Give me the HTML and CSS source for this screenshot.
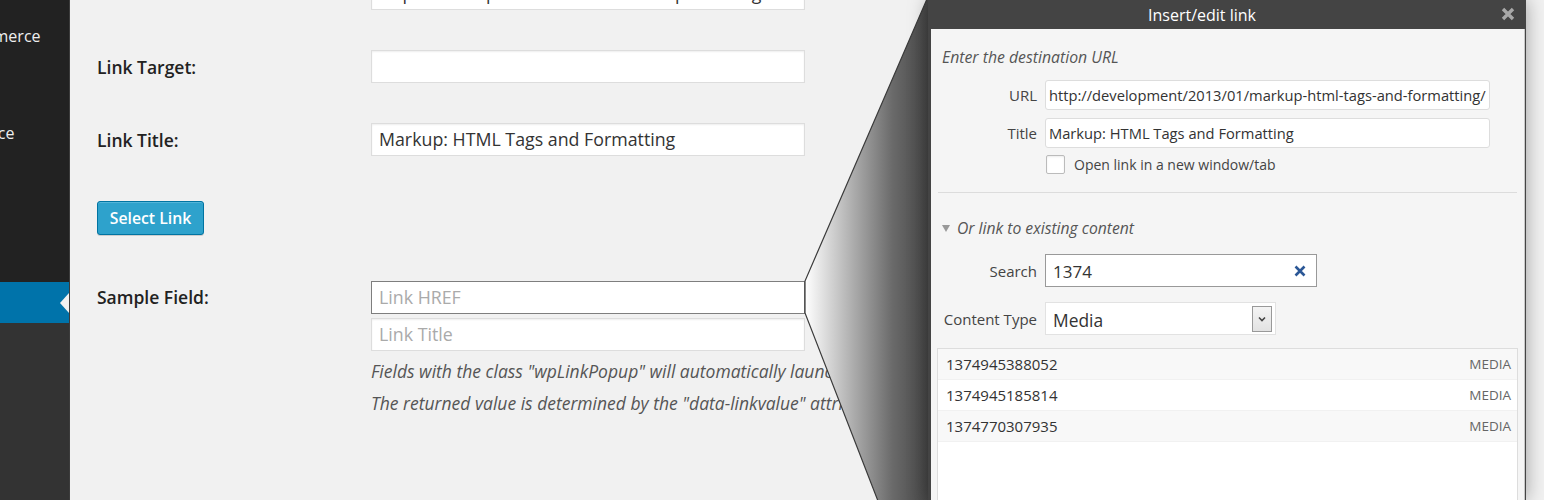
FILE: index.html
```html
<!DOCTYPE html>
<html>
<head>
<meta charset="utf-8">
<link rel="stylesheet" href="styles.css">
</head>
<body>
<div class="page">
  <aside class="sidebar">
    <div class="menu-top">
      <div class="menu-item"><span class="menu-text">WooCommerce</span></div>
      <div class="menu-item"><span class="menu-text">Appearance</span></div>
    </div>
    <div class="menu-active"><span class="active-arrow"></span></div>
    <div class="menu-bottom"></div>
  </aside>
  <main class="content">
    <div class="form">
      <div class="row">
        <div class="label"></div>
        <div class="input">http://development/2013/01/markup-html-tags-and-formatting/</div>
      </div>
      <div class="row">
        <div class="label">Link Target:</div>
        <div class="input"></div>
      </div>
      <div class="row">
        <div class="label">Link Title:</div>
        <div class="input">Markup: HTML Tags and Formatting</div>
      </div>
      <div class="row row-button">
        <button class="btn-primary">Select Link</button>
      </div>
      <div class="row row-sample">
        <div class="label">Sample Field:</div>
        <div class="field-stack">
          <div class="input input-focus placeholder">Link HREF</div>
          <div class="input input-second placeholder">Link Title</div>
          <p class="desc desc-first">Fields with the class "wpLinkPopup" will automatically launch the link dialog when focused.</p>
          <p class="desc">The returned value is determined by the "data-linkvalue" attribute on the field.</p>
        </div>
      </div>
    </div>
  </main>
</div>

<svg class="cone" width="1544" height="500" viewBox="0 0 1544 500">
  <defs>
    <linearGradient id="coneGrad" gradientUnits="userSpaceOnUse" x1="805" y1="0" x2="930" y2="0">
      <stop offset="0" stop-color="#ffffff"/>
      <stop offset="0.35" stop-color="#b4b4b4"/>
      <stop offset="0.7" stop-color="#6a6a6a"/>
      <stop offset="1" stop-color="#444444"/>
    </linearGradient>
  </defs>
  <polygon points="805,281 927,-1 940,-1 940,501 878,501 805,313" fill="url(#coneGrad)"/>
  <polyline points="927,-1 805,281 805,313 878,501" fill="none" stroke="#3a3a3a" stroke-width="1.2"/>
</svg>

<div class="popup">
  <div class="popup-header">
    <span class="popup-title">Insert/edit link</span>
    <svg class="popup-close" width="14" height="14" viewBox="0 0 14 14"><path d="M2 2L12 12M12 2L2 12" stroke="#a8a8a8" stroke-width="3.4" stroke-linecap="butt"/></svg>
  </div>
  <div class="popup-body">
    <p class="intro">Enter the destination URL</p>
    <div class="p-row">
      <span class="p-label">URL</span>
      <div class="p-input">http://development/2013/01/markup-html-tags-and-formatting/</div>
    </div>
    <div class="p-row">
      <span class="p-label">Title</span>
      <div class="p-input">Markup: HTML Tags and Formatting</div>
    </div>
    <div class="p-check">
      <span class="checkbox"></span>
      <span class="check-label">Open link in a new window/tab</span>
    </div>
    <div class="separator"></div>
    <p class="toggle"><span class="tri"></span>Or link to existing content</p>
    <div class="p-row p-row-tall">
      <span class="p-label">Search</span>
      <div class="search-input">
        <span>1374</span>
        <svg class="search-clear" width="12" height="12" viewBox="0 0 12 12"><path d="M1.5 1.5L10.5 10.5M10.5 1.5L1.5 10.5" stroke="#2b5796" stroke-width="2.6"/></svg>
      </div>
    </div>
    <div class="p-row p-row-tall p-row-select">
      <span class="p-label">Content Type</span>
      <div class="select">
        <span>Media</span>
        <span class="select-arrow"><svg width="8" height="6" viewBox="0 0 8 6"><path d="M1 1.5L4 4.5L7 1.5" fill="none" stroke="#444" stroke-width="1.6"/></svg></span>
      </div>
    </div>
    <div class="results">
      <div class="result alt"><span class="r-title">1374945388052</span><span class="r-type">MEDIA</span></div>
      <div class="result"><span class="r-title">1374945185814</span><span class="r-type">MEDIA</span></div>
      <div class="result alt"><span class="r-title">1374770307935</span><span class="r-type">MEDIA</span></div>
    </div>
  </div>
</div>
</body>
</html>
```

FILE: styles.css
```css
* { box-sizing: border-box; }
html, body {
  margin: 0;
  padding: 0;
  width: 1544px;
  height: 500px;
  overflow: hidden;
  background: #f1f1f1;
  font-family: "Open Sans", "Noto Sans", sans-serif;
  color: #333;
}
.page {
  display: flex;
  width: 1544px;
  height: 500px;
}
.sidebar {
  width: 70px;
  flex: none;
  display: flex;
  flex-direction: column;
  border-right: 1px solid #3c3c3c;
}
.menu-top {
  height: 282px;
  background: #222;
  padding-top: 19px;
  display: flex;
  flex-direction: column;
  gap: 63px;
}
.menu-item {
  height: 34px;
  display: flex;
  justify-content: flex-start;
  align-items: center;
  overflow: hidden;
  white-space: nowrap;
  color: #eee;
  font-size: 16px;
}
.menu-text {
  margin-left: -75px;
}
.menu-active {
  height: 41px;
  background: #0073aa;
  position: relative;
}
.active-arrow {
  position: absolute;
  right: 0;
  top: 11px;
  width: 0;
  height: 0;
  border-top: 10px solid transparent;
  border-bottom: 10px solid transparent;
  border-right: 9px solid #f1f1f1;
}
.menu-bottom {
  flex: 1;
  background: #333;
}
.content {
  flex: 1;
  padding-left: 27px;
}
.form {
  margin-top: -23px;
  display: flex;
  flex-direction: column;
}
.row {
  display: flex;
  align-items: center;
  height: 33px;
  margin-bottom: 40px;
}
.label {
  width: 274px;
  flex: none;
  font-size: 17.5px;
  font-weight: 600;
  color: #222;
}
.input {
  width: 434px;
  height: 33px;
  background: #fff;
  border: 1px solid #ddd;
  box-shadow: inset 0 1px 2px rgba(0,0,0,0.07);
  font-size: 17.8px;
  line-height: 31px;
  padding: 0 7px;
  white-space: nowrap;
  overflow: hidden;
  color: #333;
}
.placeholder { color: #aaa; }
.input-focus { border-color: #7e7e7e; box-shadow: none; }
.input-second { margin-top: 4px; }
.row-button {
  height: 34px;
  margin-top: 5px;
  margin-bottom: 46px;
}
.btn-primary {
  height: 34px;
  width: 107px;
  background: #2ea2cc;
  border: 1px solid #0074a2;
  border-radius: 3px;
  box-shadow: inset 0 1px 0 rgba(120,200,230,0.5), 0 1px 0 rgba(0,0,0,0.15);
  color: #fff;
  font-family: "Open Sans", "Noto Sans", sans-serif;
  font-size: 15.8px;
  font-weight: 600;
  padding: 0;
}
.row-sample {
  height: auto;
  align-items: flex-start;
}
.row-sample .label {
  line-height: 33px;
}
.field-stack {
  display: flex;
  flex-direction: column;
  width: 485px;
}
.desc {
  margin: 0;
  font-size: 17.5px;
  font-style: italic;
  color: #555;
  line-height: 32px;
  white-space: nowrap;
  overflow: hidden;
}
.desc-first { margin-top: 4px; }

.cone {
  position: absolute;
  left: 0;
  top: 0;
  pointer-events: none;
}

.popup {
  position: absolute;
  left: 928px;
  top: 0;
  width: 598px;
  height: 500px;
  background: #444;
  box-shadow: 0 0 18px rgba(0,0,0,0.35);
  display: flex;
  flex-direction: column;
  padding: 0 1px 0 3px;
}
.popup-header {
  height: 29px;
  flex: none;
  display: flex;
  align-items: center;
  justify-content: center;
  position: relative;
  padding-right: 52px;
  color: #fff;
  font-size: 16px;
}
.popup-close {
  position: absolute;
  right: 10px;
  top: 7px;
}
.popup-body {
  flex: 1;
  background: #f5f5f5;
  border-right: 1px solid #c8c8c8;
  padding: 18px 6px 0 6px;
}
.intro {
  margin: 0 0 13px 5px;
  font-size: 15.8px;
  font-style: italic;
  color: #555;
  line-height: 20px;
}
.p-row {
  display: flex;
  align-items: center;
  height: 30px;
  margin-bottom: 8px;
}
.p-label {
  width: 108px;
  flex: none;
  text-align: right;
  padding-right: 8px;
  font-size: 15px;
  color: #444;
  white-space: nowrap;
}
.p-input {
  width: 445px;
  height: 30px;
  background: #fff;
  border: 1px solid #ddd;
  border-radius: 3px;
  font-size: 14.7px;
  line-height: 28px;
  padding: 0 3px;
  white-space: nowrap;
  overflow: hidden;
  color: #333;
}
.p-check {
  display: flex;
  align-items: center;
  height: 19px;
  margin: -1px 0 0 109px;
}
.checkbox {
  width: 19px;
  height: 19px;
  background: #fff;
  border: 1px solid #bbb;
  border-radius: 2px;
  box-shadow: inset 0 1px 2px rgba(0,0,0,0.08);
}
.check-label {
  margin-left: 9px;
  font-size: 14px;
  color: #444;
}
.separator {
  height: 1px;
  background: #dcdcdc;
  margin: 18px 1px 0 1px;
}
.toggle {
  margin: 25px 0 16px 5px;
  display: flex;
  align-items: center;
  font-size: 15.7px;
  font-style: italic;
  color: #555;
  line-height: 20px;
}
.tri {
  width: 0;
  height: 0;
  border-left: 4px solid transparent;
  border-right: 4px solid transparent;
  border-top: 7px solid #999;
  margin-right: 7px;
}
.p-row-tall {
  height: 33px;
  margin-bottom: 15px;
}
.search-input {
  width: 272px;
  height: 33px;
  background: #fff;
  border: 1px solid #999;
  display: flex;
  align-items: center;
  justify-content: space-between;
  padding: 0 10px 0 7px;
  font-size: 17px;
  color: #333;
}
.search-input span { padding-top: 1px; }
.p-row-select { margin-bottom: 13px; }
.select {
  width: 231px;
  height: 33px;
  background: #fff;
  border: 1px solid #e2e2e2;
  display: flex;
  align-items: center;
  justify-content: space-between;
  padding: 0 3px 0 7px;
  font-size: 17.4px;
  color: #333;
}
.select span:first-child { padding-top: 2px; }
.select-arrow {
  width: 20px;
  height: 26px;
  border: 1px solid #999;
  background: linear-gradient(#f4f4f4, #e2e2e2);
  display: flex;
  align-items: center;
  justify-content: center;
}
.results {
  height: 200px;
  background: #fff;
  border: 1px solid #ddd;
}
.result {
  height: 31px;
  display: flex;
  align-items: center;
  justify-content: space-between;
  padding: 0 6px 0 8px;
  border-bottom: 1px solid #f1f1f1;
}
.result.alt { background: #f8f8f8; }
.r-title { font-size: 15px; color: #333; }
.r-type { font-size: 13.5px; color: #666; }
```
